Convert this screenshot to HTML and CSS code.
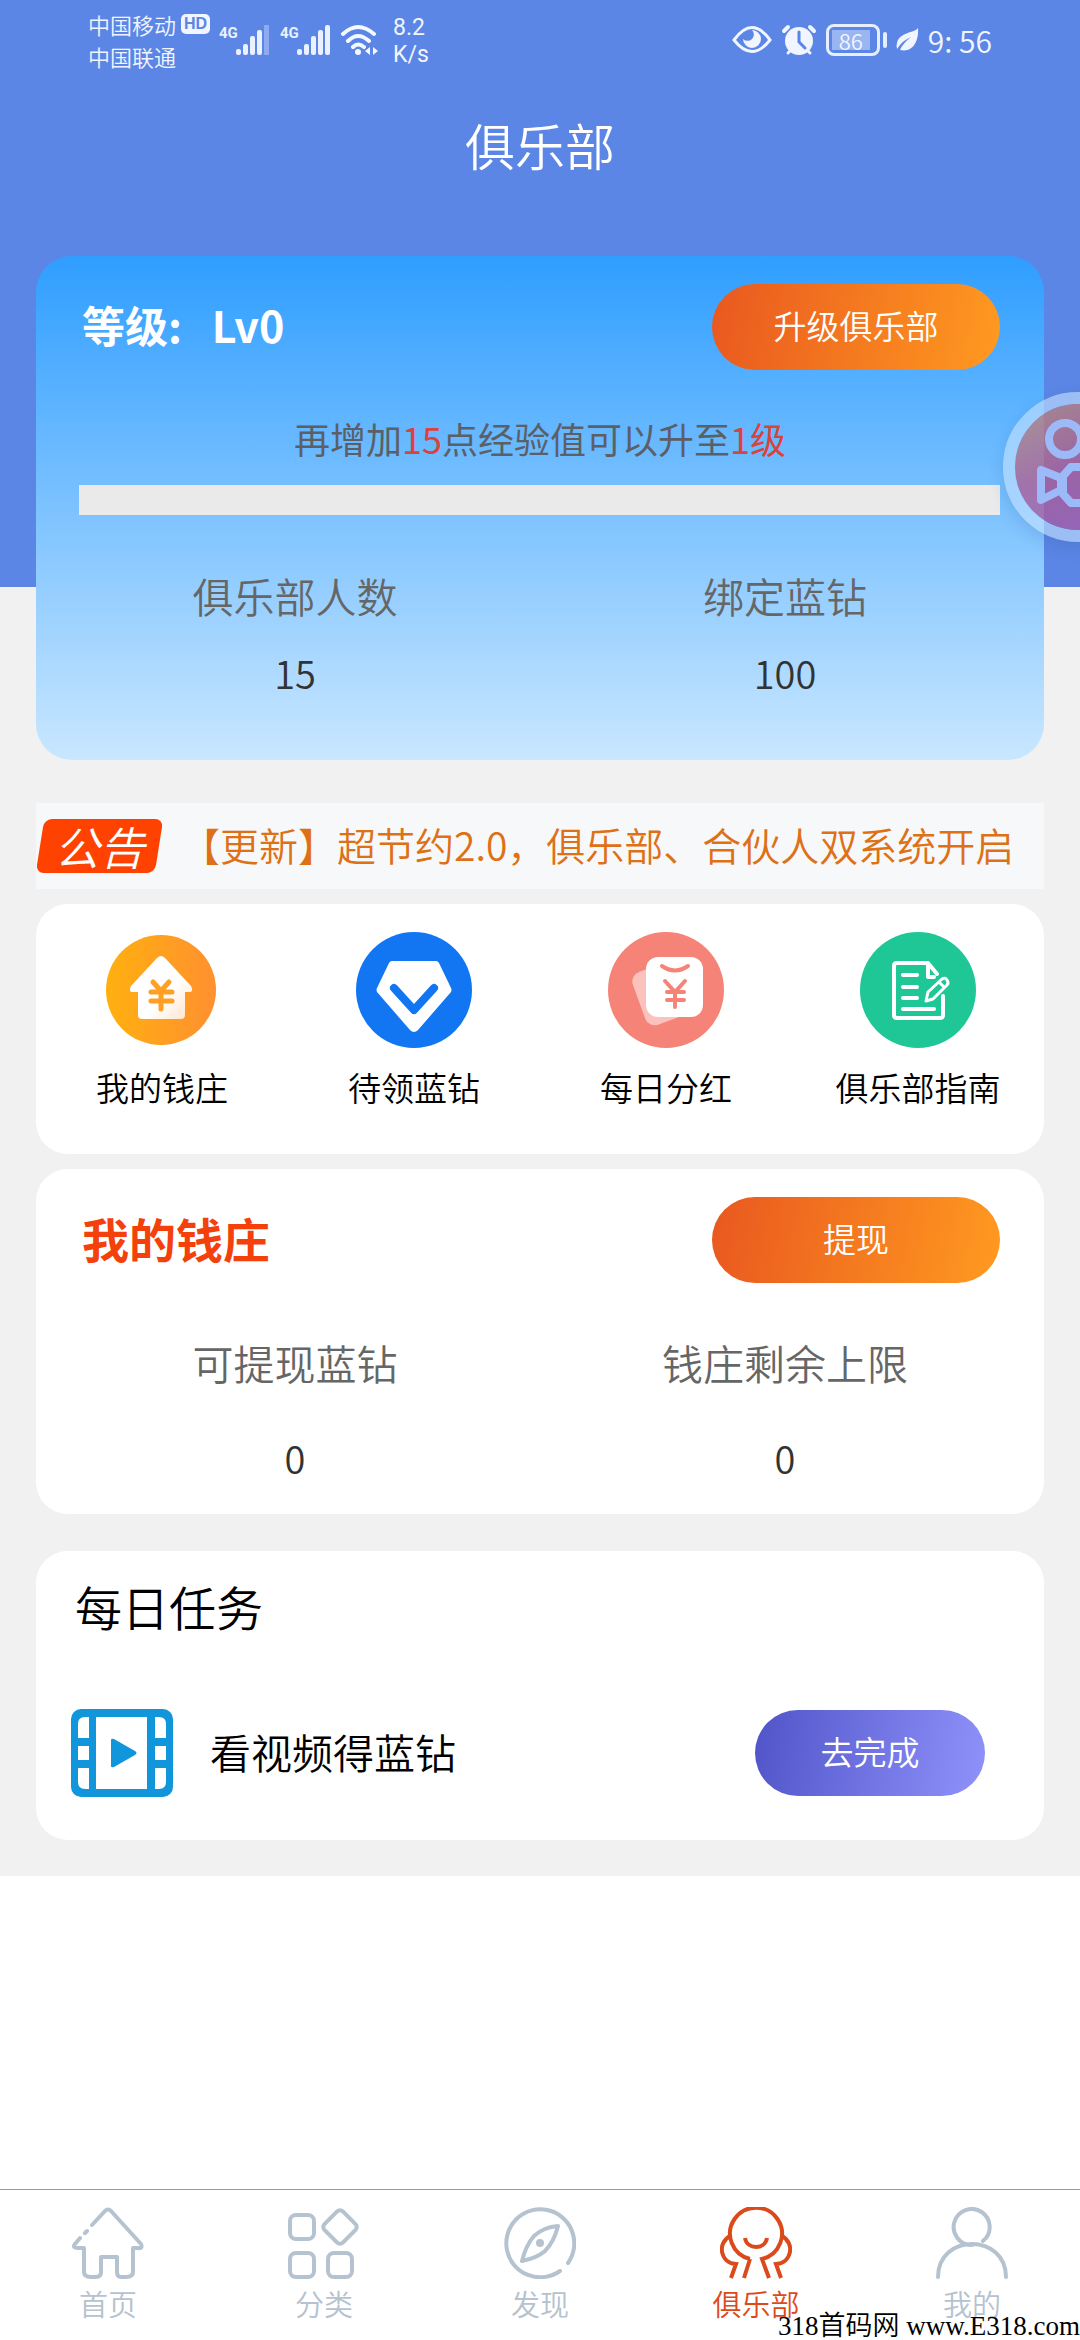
FILE: index.html
```html
<!DOCTYPE html>
<html lang="zh-CN">
<head>
<meta charset="utf-8">
<meta name="viewport" content="width=device-width, initial-scale=1">
<title>俱乐部</title>
<link rel="stylesheet" href="styles.css">
</head>
<body>
<div class="app">
  <header class="top">
    <div class="status">
      <div class="carriers">
        <span class="carrier">中国移动 <b class="hd">HD</b></span>
        <span class="carrier">中国联通</span>
      </div>
      <svg class="signal" width="52" height="32" viewBox="0 0 52 32" fill="#eaf1ff">
        <text x="0" y="14" class="net">4G</text>
        <rect x="17" y="25" width="5" height="6" rx="2"/><rect x="24" y="20" width="5" height="11" rx="2"/><rect x="31" y="12" width="5" height="19" rx="2"/><rect x="38" y="6" width="5" height="25" rx="2"/><rect x="45" y="1" width="5" height="30" rx="1" opacity=".35"/>
      </svg>
      <svg class="signal second" width="52" height="32" viewBox="0 0 52 32" fill="#eaf1ff">
        <text x="0" y="14" class="net">4G</text>
        <rect x="17" y="25" width="5" height="6" rx="2"/><rect x="24" y="20" width="5" height="11" rx="2"/><rect x="31" y="12" width="5" height="19" rx="2"/><rect x="38" y="6" width="5" height="25" rx="2"/><rect x="45" y="1" width="5" height="30" rx="2"/>
      </svg>
      <svg class="wifi" width="38" height="34" viewBox="0 0 38 34" fill="none" stroke="#f4f8ff" stroke-width="4" stroke-linecap="round">
        <path d="M3 11Q18 -3 34 11M8 18Q18 8 29 18M13 24Q18 19 24 24"/>
        <circle cx="18" cy="29" r="3" fill="#f4f8ff" stroke="none"/>
        <path d="M25 28l5-4v8zM38 28l-5-4v8z" fill="#f4f8ff" stroke="none"/>
      </svg>
      <span class="speed">8.2<br>K/s</span>
      <div class="status-right">
        <svg width="40" height="30" viewBox="0 0 40 30" fill="none" stroke="#f0f5ff" stroke-width="3">
          <path d="M2 15Q20 -10 38 15Q20 38 2 15z"/><path d="M20 5a9 9 0 1 1-9 9a4.500 4.500 0 0 0 9-9z" fill="#f0f5ff" stroke="none"/>
        </svg>
        <svg width="36" height="32" viewBox="0 0 36 32" fill="none" stroke="#f0f5ff" stroke-linecap="round">
          <circle cx="18" cy="17" r="14" fill="#f0f5ff" stroke="none"/>
          <path d="M3 7l4-4M33 7l-4-4" stroke-width="4"/><path d="M7 29l3-3M29 29l-3-3" stroke-width="3"/>
          <path d="M18 8v10l6 6" stroke="#5b86e5" stroke-width="3"/>
        </svg>
        <span class="battery"><span class="charge">86</span></span>
        <svg class="leaf" width="24" height="26" viewBox="0 0 24 26">
          <path d="M23 1C20 6 4 5 2 16Q1 19 2 22Q8 13 16 10Q8 16 5 23C18 26 24 14 23 1z" fill="#f0f5ff"/>
        </svg>
        <time class="clock">9: 56</time>
      </div>
    </div>
    <h1 class="title">俱乐部</h1>
  </header>

  <main class="content">
    <section class="card level">
      <div class="card-head">
        <h2 class="level-name">等级: <span class="level-value">Lv0</span></h2>
        <button class="pill" type="button">升级俱乐部</button>
      </div>
      <p class="hint">再增加<em>15</em>点经验值可以升至<em>1级</em></p>
      <div class="bar" role="progressbar" aria-valuenow="0" aria-valuemin="0" aria-valuemax="15"></div>
      <dl class="stats">
        <div class="stat"><dt>俱乐部人数</dt><dd>15</dd></div>
        <div class="stat"><dt>绑定蓝钻</dt><dd>100</dd></div>
      </dl>
    </section>

    <section class="notice">
      <span class="tag">公告</span>
      <p class="notice-text">【更新】超节约2.0，俱乐部、合伙人双系统开启</p>
    </section>

    <nav class="card shortcuts">
      <a class="shortcut" href="#bank">
        <svg width="116" height="116" viewBox="0 0 116 116">
          <defs>
            <linearGradient id="gold"><stop offset="0" stop-color="#ffb00f"/><stop offset="1" stop-color="#ff9030"/></linearGradient>
            <linearGradient id="wall" x2="1" y2="1"><stop offset=".6" stop-color="#fff"/><stop offset="1" stop-color="#ffe3c8"/></linearGradient>
          </defs>
          <circle cx="57" cy="58" r="55" fill="url(#gold)"/>
          <path d="M57 24q2 0 4 2l26 28q3 6-2 6h-4v23q0 4-4 4H38q-4 0-4-4V60h-5q-5 0-2-6l26-28q2-2 4-2z" fill="url(#wall)"/>
          <path d="M49 50l8 9 8-9M47 60h21M47 69h21M57 60v17" fill="none" stroke="#ffa024" stroke-width="5" stroke-linecap="round"/>
        </svg>
        <span>我的钱庄</span>
      </a>
      <a class="shortcut" href="#pending">
        <svg width="116" height="116" viewBox="0 0 116 116">
          <circle cx="58" cy="58" r="58" fill="#1276f3"/>
          <path d="M36 29h44q2 0 3 2l12 25q1 2 0 4L62 98q-4 4-8 0L21 60q-1-2 0-4l12-25q1-2 3-2z" fill="#fff"/>
          <path d="M38 56l20 22 20-22" fill="none" stroke="#1276f3" stroke-width="8" stroke-linecap="round" stroke-linejoin="round"/>
        </svg>
        <span>待领蓝钻</span>
      </a>
      <a class="shortcut" href="#bonus">
        <svg width="116" height="116" viewBox="0 0 116 116">
          <circle cx="58" cy="58" r="58" fill="#f68378"/>
          <rect x="29" y="34" width="50" height="56" rx="10" fill="#fbc1bc" transform="rotate(-20 52 60)"/>
          <rect x="38" y="25" width="57" height="60" rx="12" fill="#fff"/>
          <path d="M54 34q13 9 26 0M57 49l10 11 10-11M59 60h17M59 68h17M67 60v15" fill="none" stroke="#f68378" stroke-width="4" stroke-linecap="round"/>
        </svg>
        <span>每日分红</span>
      </a>
      <a class="shortcut" href="#guide">
        <svg width="116" height="116" viewBox="0 0 116 116">
          <circle cx="58" cy="58" r="58" fill="#1fc796"/>
          <g fill="none" stroke="#fff" stroke-width="4" stroke-linejoin="round" stroke-linecap="round">
            <path d="M83 64v19q0 3-3 3H37q-3 0-3-3V34q0-3 3-3h31l9 11M68 32v13h6"/>
            <path d="M43 43h14M43 55h14M43 66h14M43 77h31"/>
            <path d="M66 69l2-9 14-13q3-2 5 1t0 5L73 67zM79 50l5 5" stroke-width="3"/>
          </g>
        </svg>
        <span>俱乐部指南</span>
      </a>
    </nav>

    <section class="card bank" id="bank">
      <div class="card-head">
        <h2 class="bank-name">我的钱庄</h2>
        <button class="pill" type="button">提现</button>
      </div>
      <dl class="stats wide">
        <div class="stat"><dt>可提现蓝钻</dt><dd>0</dd></div>
        <div class="stat"><dt>钱庄剩余上限</dt><dd>0</dd></div>
      </dl>
    </section>

    <section class="card tasks">
      <h2 class="tasks-name">每日任务</h2>
      <div class="task">
        <svg width="102" height="88" viewBox="0 0 102 88">
          <rect width="102" height="88" rx="10" fill="#1296db"/>
          <g fill="#fff"><rect x="25" y="8" width="51" height="72"/>
          <path d="M18 8v21H7V15q0-7 7-7zM7 37h11v14H7zM7 59h11v21h-4q-7 0-7-7zM84 8v21h11V15q0-7-7-7zM84 37h11v14H84zM84 59h11v14q0 7-7 7h-4z"/></g>
          <path d="M40 31q0-2 3-1l21 12q3 2 0 4L43 58q-3 1-3-1z" fill="#1296db"/>
        </svg>
        <span class="task-name">看视频得蓝钻</span>
        <button class="pill violet" type="button">去完成</button>
      </div>
    </section>
  </main>

  <nav class="tabs">
    <a class="tab" href="#home">
      <svg width="72" height="72" viewBox="0 0 72 72">
        <path d="M20 18L33 4q3-3 6 0l30 33q2 5-3 4h-5v24q0 5-7 5h-5q-4 0-4-5V50H29v15q0 5-5 5h-5q-7 0-7-5V41H6q-6 0-3-4l5-6M13 26l2-2"/>
      </svg>
      <span>首页</span>
    </a>
    <a class="tab" href="#category">
      <svg width="72" height="72" viewBox="0 0 72 72">
        <rect x="2" y="8" width="24" height="24" rx="6"/><rect x="2" y="46" width="24" height="24" rx="6"/><rect x="40" y="46" width="24" height="24" rx="6"/><rect x="39" y="7" width="26" height="26" rx="4" transform="rotate(45 52 20)"/>
      </svg>
      <span>分类</span>
    </a>
    <a class="tab" href="#discover">
      <svg width="72" height="72" viewBox="0 0 72 72">
        <path d="M56 64A34 34 0 1 1 64 56M54 19Q50 35 41 44Q33 51 18 54Q22 38 30 29Q40 20 54 19z"/><circle cx="36" cy="36" r="2"/>
      </svg>
      <span>发现</span>
    </a>
    <a class="tab active" href="#club" aria-current="page">
      <svg width="72" height="72" viewBox="0 0 72 72">
        <path d="M30 52A26 26 0 1 1 42 52L49 71M30 52L24 71M10 29C-3 36 0 56 16 57L11 71M62 29C75 36 72 56 56 57L61 71M25 31c2 12 20 12 22 0"/>
      </svg>
      <span>俱乐部</span>
    </a>
    <a class="tab" href="#mine">
      <svg width="72" height="72" viewBox="0 0 72 72">
        <path d="M47 34A18 18 0 1 0 36 38M2 70C2 26 70 26 70 70"/>
      </svg>
      <span>我的</span>
    </a>
  </nav>

  <button class="float" type="button" aria-label="录屏">
    <svg width="150" height="150" viewBox="0 0 150 150">
      <defs><linearGradient id="ball" x2=".4" y2="1"><stop offset="0" stop-color="#c08a70" stop-opacity=".75"/><stop offset=".6" stop-color="#b0588f" stop-opacity=".75"/><stop offset="1" stop-color="#a85aa5" stop-opacity=".75"/></linearGradient></defs>
      <circle cx="75" cy="75" r="69" fill="none" stroke="#c3e1ff" stroke-opacity=".62" stroke-width="12"/>
      <circle cx="75" cy="75" r="63" fill="url(#ball)"/>
      <g fill="none" stroke="#9dbaf8" stroke-width="8" stroke-linejoin="round"><circle cx="62" cy="47" r="16"/><circle cx="102" cy="43" r="19"/>
      <path d="M38 78v30l20-10V86zM68 75h44v36H68l-8-9V84z"/></g>
    </svg>
  </button>
  <span class="mark">318首码网 www.E318.com</span>
</div>
</body>
</html>
```
FILE: styles.css
```css
* {
  box-sizing: border-box;
}

body,
h1,
h2,
p,
dl,
dd {
  margin: 0;
}

body {
  background: #fff;
  color: #000;
  font-family: "Noto Sans CJK SC", "Noto Sans", sans-serif;
  font-weight: 350;
}

h1,
h2 {
  font-weight: 350;
}

a {
  color: inherit;
  text-decoration: none;
}

svg {
  display: block;
  flex: none;
}

.app {
  position: relative;
  display: flex;
  flex-direction: column;
  min-height: 100vh;
  overflow: hidden;
}

/* Header */
.top {
  padding-bottom: 403px;
  background: #5b86e5;
  color: #fff;
}

.status {
  display: flex;
  align-items: flex-start;
  height: 80px;
  padding: 8px 88px 0 88px;
  color: #f0f5ff;
}

.carriers {
  width: 131px;
}

.carrier {
  display: flex;
  align-items: center;
  gap: 5px;
  font-size: 22px;
  line-height: 32px;
  white-space: nowrap;
}

.hd {
  padding: 0 3px;
  border-radius: 5px;
  background: #f0f5ff;
  color: #5b86e5;
  font: bold 16px/20px "Liberation Sans", sans-serif;
}

.signal {
  margin-top: 16px;
}

.net {
  font: bold 15px Roboto, sans-serif;
}

.second {
  margin-left: 9px;
}

.wifi {
  margin: 15px 0 0 8px;
}

.speed {
  margin: 6px 0 0 15px;
  font: 23px/27px Roboto, sans-serif;
}

.status-right {
  display: flex;
  align-items: center;
  gap: 9px;
  height: 64px;
  margin-left: auto;
}

.battery {
  position: relative;
  width: 54px;
  height: 32px;
  padding: 3px;
  border: 3px solid #e6eeff;
  border-radius: 8px;
}

.battery::after {
  content: "";
  position: absolute;
  top: 5px;
  right: -10px;
  width: 4px;
  height: 16px;
  border-radius: 2px;
  background: #e6eeff;
}

.charge {
  display: block;
  width: 38px;
  background: #9ab6f2;
  font-size: 22px;
  line-height: 20px;
  text-align: center;
}

.leaf {
  margin-left: 6px;
}

.clock {
  font-size: 30px;
  line-height: 32px;
}

.title {
  height: 104px;
  padding-top: 14px;
  font-size: 50px;
  line-height: 100px;
  text-align: center;
}

/* Cards */
.content {
  margin-top: -331px;
  padding: 0 36px 36px;
  background: linear-gradient(transparent 331px, #f1f1f1 331px);
}

.card {
  border-radius: 32px;
  background: #fff;
}

.card-head {
  display: flex;
  align-items: center;
  justify-content: space-between;
  padding: 28px 44px 0 46px;
}

.card-head h2 {
  padding-bottom: 6px;
}

.pill {
  width: 288px;
  height: 86px;
  padding: 0 0 4px;
  border: 0;
  border-radius: 43px;
  background: linear-gradient(100deg, #e9581f, #ff9a20);
  color: #fff;
  font: inherit;
  font-size: 33px;
}

.stats {
  display: flex;
  padding: 0 14px;
}

.stat {
  flex: 1;
  text-align: center;
}

.stat dt {
  color: #666;
  font-size: 41px;
  line-height: 58px;
}

.stat dd {
  margin-top: 20px;
  color: #333;
  font-size: 38px;
  line-height: 58px;
}

.wide dd {
  margin-top: 38px;
}

/* Level */
.level {
  height: 504px;
  border-radius: 36px;
  background: linear-gradient(#2f9eff, #7cc2ff 50%, #c9e7ff);
}

.level-name {
  color: #fff;
  font-size: 43px;
  font-weight: 700;
}

.level-value {
  padding-left: 20px;
}

.hint {
  margin-top: 42px;
  color: #5b6066;
  font-size: 36px;
  font-weight: 400;
  line-height: 52px;
  text-align: center;
}

.hint em {
  color: #d8433c;
  font-style: normal;
}

.bar {
  height: 30px;
  margin: 21px 44px 51px 43px;
  background: #eaeaea;
}

/* Notice */
.notice {
  display: flex;
  align-items: center;
  gap: 18px;
  height: 86px;
  margin-top: 43px;
  background: #f6f8fa;
}

.tag {
  position: relative;
  z-index: 0;
  flex: none;
  width: 127px;
  color: #fff;
  font-size: 45px;
  font-style: italic;
  line-height: 54px;
  text-align: center;
}

.tag::before {
  content: "";
  position: absolute;
  inset: 0 4px;
  z-index: -1;
  border-radius: 8px;
  background: #ff4200;
  transform: skewX(-9deg);
}

.notice-text {
  padding-bottom: 5px;
  color: #de7016;
  font-size: 39px;
  white-space: nowrap;
}

/* Shortcuts */
.shortcuts {
  display: grid;
  grid-template-columns: repeat(4, 1fr);
  height: 250px;
  margin-top: 15px;
  padding-top: 28px;
}

.shortcut {
  display: flex;
  flex-direction: column;
  align-items: center;
  gap: 15px;
  font-size: 33px;
  line-height: 48px;
}

/* Bank */
.bank {
  height: 345px;
  margin-top: 15px;
}

.bank-name {
  color: #f4410b;
  font-size: 47px;
  font-weight: 700;
}

.wide {
  margin-top: 50px;
}

/* Tasks */
.tasks {
  height: 289px;
  margin-top: 37px;
  padding: 21px 59px 0 35px;
}

.tasks-name {
  padding-left: 4px;
  font-size: 47px;
  line-height: 68px;
}

.task {
  display: flex;
  align-items: center;
  margin-top: 69px;
}

.task-name {
  flex: 1;
  margin-left: 37px;
  padding-bottom: 4px;
  font-size: 41px;
  line-height: 60px;
}

.violet {
  width: 230px;
  background: linear-gradient(100deg, #5054c8, #9092fb);
}

/* Tab bar */
.tabs {
  display: grid;
  grid-template-columns: repeat(5, 1fr);
  height: 151px;
  margin-top: auto;
  padding-top: 17px;
  border-top: 1px solid #999;
}

.tab {
  display: flex;
  flex-direction: column;
  align-items: center;
  gap: 2px;
  color: #b5c2cf;
  font-size: 29px;
  line-height: 44px;
}

.tab svg {
  fill: none;
  stroke: currentColor;
  stroke-width: 4;
  stroke-linecap: round;
  stroke-linejoin: round;
}

.tab.active {
  color: #db4a1b;
}

.tab.active svg {
  stroke-linecap: butt;
  stroke-linejoin: miter;
}

/* Overlays */
.float {
  position: absolute;
  top: 392px;
  right: -73px;
  padding: 0;
  border: 0;
  border-radius: 50%;
  background: none;
  box-shadow: 0 6px 16px rgba(30, 60, 120, 0.15);
}

.mark {
  position: absolute;
  right: 0;
  bottom: 0;
  font-family: "Liberation Serif", "Noto Sans CJK SC", serif;
  font-size: 27px;
  line-height: 28px;
  white-space: nowrap;
}
```
